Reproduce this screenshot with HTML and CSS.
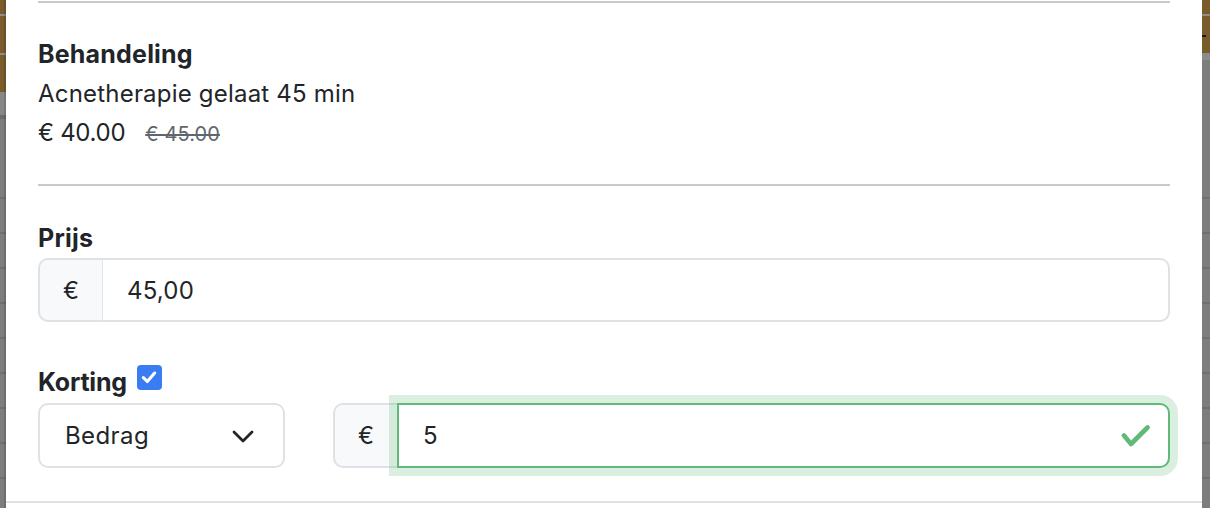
FILE: index.html
```html
<!DOCTYPE html>
<html lang="nl">
<head>
<meta charset="utf-8">
<title>Behandeling</title>
<link rel="stylesheet" href="styles.css">
</head>
<body>
<div class="screen">
  <div class="backdrop backdrop-left"></div>
  <div class="modal">
    <div class="modal-body">
      <hr class="rule rule-top">
      <div class="treatment">
        <div class="label">Behandeling</div>
        <div class="line">Acnetherapie gelaat 45 min</div>
        <div class="line price"><span>€ 40.00</span><s class="old-price">€ 45.00</s></div>
      </div>
      <hr class="rule">
      <div class="field">
        <div class="label">Prijs</div>
        <div class="input-group">
          <span class="addon">€</span>
          <div class="control">45,00</div>
        </div>
      </div>
      <div class="field discount">
        <div class="label">Korting <span class="checkbox"><svg viewBox="0 0 16 16" width="18" height="18"><path d="M3 8.5 L6.5 12 L13 4.5" fill="none" stroke="#fff" stroke-width="2.8" stroke-linecap="round" stroke-linejoin="round"/></svg></span></div>
        <div class="discount-row">
          <div class="select">
            <span>Bedrag</span>
            <svg class="chevron" viewBox="0 0 22 13" width="22" height="13"><path d="M2 2 L11 11 L20 2" fill="none" stroke="#212529" stroke-width="2.8" stroke-linecap="round" stroke-linejoin="round"/></svg>
          </div>
          <div class="input-group valid">
            <span class="addon">€</span>
            <div class="control">
              <span>5</span>
              <svg class="check" viewBox="0 0 30 26" width="30" height="26"><path d="M3 12.5 L10 21 L26.5 4.5" fill="none" stroke="#5fba78" stroke-width="4.6" stroke-linecap="round" stroke-linejoin="round"/></svg>
            </div>
          </div>
        </div>
      </div>
    </div>
    <div class="modal-footer"></div>
  </div>
  <div class="backdrop backdrop-right"></div>
</div>
</body>
</html>
```
FILE: styles.css
```css
* { box-sizing: border-box; }
html, body { margin: 0; padding: 0; }
body {
  font-family: Inter, "Liberation Sans", Arial, sans-serif;
  color: #212529;
  background: #7d7d7d;
  letter-spacing: 0.2px;
}
.screen {
  display: flex;
  width: 1210px;
  height: 508px;
  overflow: hidden;
}
.backdrop {
  flex: none;
  height: 508px;
}
.backdrop-left {
  width: 6px;
  background:
    linear-gradient(to right, transparent 0 4px, rgba(0,0,0,0.12) 4px 6px),
    repeating-linear-gradient(to bottom, transparent 0 33px, #6f6f6f 33px 35px),
    linear-gradient(to bottom,
      #7a5b2c 0 14px, #8d8d8d 14px 16px,
      #7a5b2c 16px 53px, #8d8d8d 53px 55px,
      #7a5b2c 55px 92px, #878787 92px 115px,
      #6c6c6c 115px 119px, #7d7d7d 119px 100%);
  background-size: 100% 100%, 100% 340px, 100% 100%;
  background-position: 0 0, 0 164px, 0 0;
  background-repeat: no-repeat;
}
.backdrop-right {
  width: 8px;
  background:
    linear-gradient(to bottom, transparent 0 35px, #1e1a12 35px 37px, transparent 37px),
    repeating-linear-gradient(to bottom, transparent 0 33px, #6f6f6f 33px 35px),
    linear-gradient(to bottom,
      #7a5b2c 0 14px, #8d8d8d 14px 16px,
      #7a5b2c 16px 53px, #8b8b8b 53px 60px,
      #7d7d7d 60px 100%);
  background-size: 4px 100%, 100% 340px, 100% 100%;
  background-position: 0 0, 0 164px, 0 0;
  background-repeat: no-repeat;
}
.modal {
  flex: none;
  width: 1196px;
  background: #fff;
  display: flex;
  flex-direction: column;
}
.modal-body {
  padding: 0 32px 33px;
}
.rule {
  border: none;
  height: 2px;
  background: #c8c9ca;
  margin: 32px 0 0;
}
.rule-top { margin-top: 1px; }
.treatment {
  margin-top: 32px;
  font-size: 24px;
  line-height: 39px;
  height: 117px;
}
.label {
  font-size: 25px;
  font-weight: 700;
  line-height: 38px;
  letter-spacing: 0.2px;
}
.treatment .label { line-height: 39px; }
.price { letter-spacing: -0.3px; }
.old-price {
  margin-left: 20px;
  font-size: 20px;
  line-height: 20px;
  letter-spacing: 0.1px;
  color: #5f666d;
}
.field { margin-top: 33px; }
.field .label { margin-bottom: 1px; }
.field.discount { margin-top: 41px; }
.field.discount .label { margin-bottom: 2px; height: 38px; letter-spacing: -0.2px; }
.checkbox {
  display: inline-flex;
  align-items: center;
  justify-content: center;
  width: 25px;
  height: 25px;
  margin-left: 4px;
  border-radius: 4px;
  background: #3a7cf2;
  vertical-align: 5px;
}
.input-group {
  display: flex;
  height: 64px;
  font-size: 24px;
}
.addon {
  flex: none;
  width: 65px;
  display: flex;
  align-items: center;
  justify-content: center;
  background: #f8f9fa;
  border: 2px solid #dee2e6;
  border-right: 1px solid #e4e7ea;
  border-radius: 10px 0 0 10px;
}
.control {
  flex: 1;
  display: flex;
  align-items: center;
  justify-content: space-between;
  padding: 0 17px 0 24px;
  background: #fff;
  border: 2px solid #dee2e6;
  border-left: none;
  border-radius: 0 10px 10px 0;
}
.discount-row {
  display: grid;
  grid-template-columns: 247px 1fr;
  column-gap: 48px;
}
.select {
  height: 65px;
  display: flex;
  align-items: center;
  justify-content: space-between;
  padding: 0 29px 0 25px;
  border: 2px solid #dee2e6;
  border-radius: 10px;
  font-size: 24px;
  letter-spacing: 0.4px;
}
.chevron { margin-top: 2px; }
.valid { height: 65px; }
.valid .addon { width: 64px; border-right: none; }
.valid .control {
  border: 2px solid #5fba78;
  padding-left: 24px;
  box-shadow: 0 0 0 8px rgba(95, 186, 120, 0.23);
}
.check { margin-top: 1px; }
.modal-footer {
  border-top: 2px solid #dee2e6;
  flex: 1;
}
```
